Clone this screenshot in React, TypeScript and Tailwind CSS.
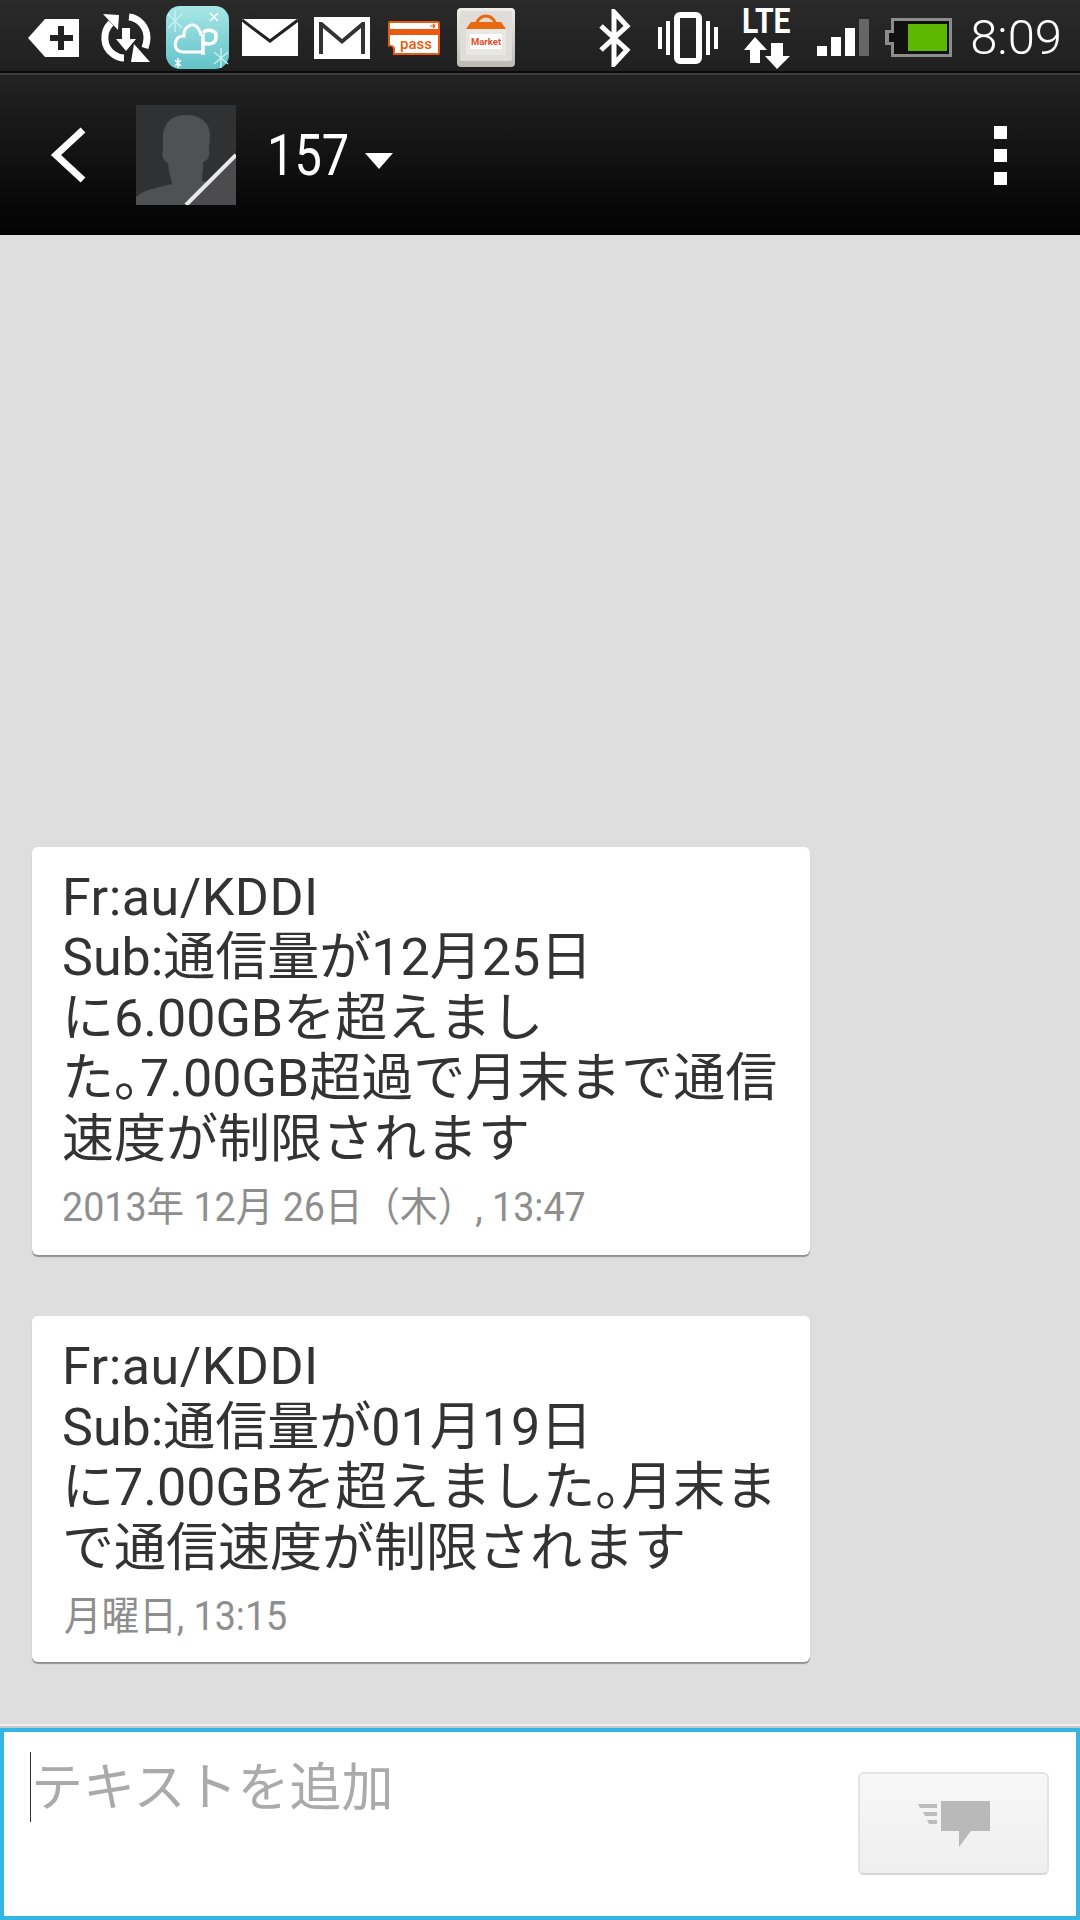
const font = { fontFamily: '"Roboto", "Noto Sans CJK JP", sans-serif' };

function StatusIcons() {
  return (
    <div className="flex h-[71px] items-center pt-[4px] pl-[28px] pr-[18px]">
      {/* notification tag */}
      <svg width="51" height="40" viewBox="0 0 51 40" className="shrink-0">
        <polygon points="0,20 17,1 51,1 51,39 17,39" fill="#fff" />
        <path d="M30 8h6v9h9v6h-9v9h-6v-9h-8v-6h8z" fill="#222" />
      </svg>
      {/* sync */}
      <svg width="52" height="52" viewBox="0 0 52 52" className="ml-[21px] shrink-0">
        <path d="M11 11C2 20 3 35 13 42C17 45 21 46 24 46" fill="none" stroke="#fff" strokeWidth="7" />
        <path d="M29 5C39 6 47 15 47 26C47 30 46 33 45 36" fill="none" stroke="#fff" strokeWidth="7" />
        <polygon points="3,2 19,3 18,18" fill="#fff" />
        <polygon points="34,32 50,50 31,50" fill="#fff" />
        <path d="M22 16h8v11h6L26 39 16 27h6z" fill="#fff" />
      </svg>
      {/* app icon */}
      <svg width="63" height="63" viewBox="0 0 63 63" className="ml-[14px] shrink-0">
        <defs>
          <linearGradient id="app" x1="0" y1="0" x2="0" y2="1">
            <stop offset="0" stopColor="#a9e6e6" />
            <stop offset="1" stopColor="#62c3c8" />
          </linearGradient>
        </defs>
        <rect width="63" height="63" rx="14" fill="url(#app)" />
        <path d="M37 46H18C10 46 8 40 10 35C11 31 15 30 18 30C17 21 27 15 32 22C34 25 35 27 35 30" fill="none" stroke="#fff" strokeWidth="3" />
        <path d="M37 49V28M37 27C40 23 51 23 50 31C50 39 41 39 37 36" fill="none" stroke="#fff" strokeWidth="3.5" />
        <g stroke="#c6f0f0" strokeWidth="1.5">
          <path d="M2 8L16 22M16 8L2 22M9 4V26" />
          <path d="M48 46L62 58M62 46L48 58M55 42V62" />
          <path d="M44 7L52 15M52 7L44 15" stroke="#fff" />
          <path d="M9 54L15 60M15 54L9 60M12 52V62" stroke="#fff" />
        </g>
      </svg>
      {/* mail */}
      <svg width="56" height="37" viewBox="0 0 56 37" className="ml-[13px] shrink-0">
        <rect width="56" height="37" fill="#fff" />
        <polyline points="0,1 28,22 56,1" fill="none" stroke="#222" strokeWidth="3" />
      </svg>
      {/* gmail */}
      <svg width="56" height="42" viewBox="0 0 56 42" className="ml-[16px] shrink-0">
        <rect width="56" height="42" fill="#fff" />
        <path d="M5 37V5h3L28 22 48 5h3v32h-4V11L28 27 9 11v26z" fill="#333" />
      </svg>
      {/* pass */}
      <svg width="52" height="34" viewBox="0 0 52 34" className="ml-[18px] shrink-0">
        <path d="M2 0H50a2 2 0 0 1 2 2V32a2 2 0 0 1-2 2H5V28a3 3 0 0 0-5-2V2a2 2 0 0 1 2-2z" fill="#ec5a10" />
        <path d="M2 2H50V32H7V27a5 5 0 0 0-5-3z" fill="#fff" />
        <rect x="0" y="8" width="52" height="6" fill="#ec5a10" />
        <path d="M42 5h5M45 3l2 2-2 2" stroke="#ec5a10" strokeWidth="1.2" fill="none" />
        <text x="28" y="28" textAnchor="middle" fontSize="15" fontWeight="500" fill="#ec5a10" fontFamily="Roboto, sans-serif">
          pass
        </text>
      </svg>
      {/* market */}
      <svg width="58" height="59" viewBox="0 0 58 59" className="ml-[17px] shrink-0">
        <defs>
          <linearGradient id="mk" x1="0" y1="0" x2="0" y2="1">
            <stop offset="0" stopColor="#f0eeea" />
            <stop offset="1" stopColor="#bdbab4" />
          </linearGradient>
        </defs>
        <rect width="58" height="59" rx="4" fill="url(#mk)" />
        <rect x="3" y="3" width="52" height="50" rx="2" fill="#e0ddd8" />
        <path d="M19 20C19 4 39 4 39 20" fill="none" stroke="#e8690f" strokeWidth="3" />
        <path d="M9 21L14 14H44L49 21z" fill="#e8690f" />
        <rect x="9" y="21" width="40" height="26" fill="#e9e7e3" />
        <rect x="13" y="26" width="32" height="15" rx="1" fill="#fff" />
        <text x="29" y="37" textAnchor="middle" fontSize="9.5" fontWeight="700" fill="#e0502a" fontFamily="Roboto, sans-serif">
          Market
        </text>
      </svg>
      {/* bluetooth */}
      <svg width="32" height="58" viewBox="0 0 32 58" className="ml-auto shrink-0">
        <polyline points="2,17 28,41 15,55 15,3 28,17 2,41" fill="none" stroke="#fff" strokeWidth="5" />
      </svg>
      {/* vibrate */}
      <svg width="60" height="52" viewBox="0 0 60 52" className="ml-[27px] shrink-0">
        <rect x="19" y="3" width="22" height="46" rx="3" fill="none" stroke="#fff" strokeWidth="6" />
        <rect x="0" y="15" width="4" height="22" fill="#fff" />
        <rect x="8" y="9" width="4" height="34" fill="#fff" />
        <rect x="48" y="9" width="4" height="34" fill="#fff" />
        <rect x="56" y="15" width="4" height="22" fill="#fff" />
      </svg>
      {/* lte */}
      <div className="ml-[24px] mt-[2px] flex w-[49px] shrink-0 flex-col">
        <span className="h-[26px] origin-left scale-x-[0.86] text-[35px] leading-[26px] font-bold text-white">LTE</span>
        <svg width="49" height="32" viewBox="0 0 49 32" className="mt-[2px] shrink-0">
          <polygon points="13,0 25,13 18,13 18,26 8,26 8,13 2,13" fill="#fff" />
          <polygon points="35,32 48,19 41,19 41,6 29,6 29,19 23,19" fill="#fff" />
        </svg>
      </div>
      {/* signal */}
      <svg width="52" height="37" viewBox="0 0 52 37" className="ml-[26px] shrink-0">
        <rect x="0" y="27" width="10" height="10" fill="#fff" />
        <rect x="14" y="18" width="10" height="19" fill="#fff" />
        <rect x="28" y="9" width="10" height="28" fill="#fff" />
        <rect x="42" y="0" width="10" height="37" fill="#666" />
      </svg>
      {/* battery */}
      <svg width="67" height="39" viewBox="0 0 67 39" className="ml-[16px] shrink-0">
        <path d="M6 0H67V39H6V27H0V12H6z" fill="#8c8c8c" />
        <path d="M9 3H64V36H9V24H4V15H9z" fill="#111" />
        <rect x="23" y="6" width="39" height="27" fill="#5cb800" />
      </svg>
      <span className="ml-[18px] text-[49px] leading-none font-light text-white">8:09</span>
    </div>
  );
}

function Bubble({ lines, date, dateClass }: { lines: React.ReactNode[]; date: string; dateClass: string }) {
  return (
    <div className="w-[778px] rounded-[6px] bg-white pl-[30px] pt-[21px] shadow-[0_2px_1px_rgba(0,0,0,0.35)]">
      <div className="text-[52px] leading-[60.5px] whitespace-nowrap text-[#333]">
        {lines.map((line, i) => (
          <div key={i}>{line}</div>
        ))}
      </div>
      <div className={`mt-[10px] origin-left scale-x-[0.94] text-[40px] leading-[56px] whitespace-nowrap text-[#8e8e8e] ${dateClass}`}>
        {date}
      </div>
    </div>
  );
}

function Maru() {
  return <span className="[font-feature-settings:'halt']">。</span>;
}

export default function App() {
  const from = <span className="tracking-[0.5px]">Fr:au/KDDI</span>;

  return (
    <div className="flex h-[1920px] w-[1080px] flex-col overflow-hidden bg-[#dedede]" style={font}>
      <div className="bg-gradient-to-b from-[#2a2a2a] to-[#1f1f1f]">
        <StatusIcons />
        <div className="h-[2px] bg-[#0a0a0a]" />
        <div className="h-[2px] bg-[#3d3d3d]" />
      </div>

      <div className="flex h-[160px] items-center bg-gradient-to-b from-[#232323] to-[#040404]">
        <svg width="36" height="56" viewBox="0 0 36 56" className="ml-[50px] shrink-0">
          <polyline points="33,3 6,28 33,53" fill="none" stroke="#fff" strokeWidth="7" />
        </svg>
        <svg width="100" height="100" viewBox="0 0 100 100" className="ml-[50px] shrink-0">
          <rect width="100" height="100" fill="#303133" />
          <path d="M50 10C35 10 27 19 27 33L27 46C25 50 28 57 32 58L33 66C34 72 36 76 36 79C25 82 8 84 0 92V100H100V82C88 82 76 79 66 76C66 72 66 68 67 64V57C72 56 74 50 73 46L74 30C74 18 64 10 50 10Z" fill="#505153" />
          <polygon points="50,100 100,50 100,100" fill="#4c4c4e" />
          <line x1="50" y1="100" x2="100" y2="50" stroke="#e8e8e8" strokeWidth="4" />
        </svg>
        <span className="ml-[31px] inline-block w-[81px] origin-left scale-x-[0.84] text-[58px] leading-none text-white">157</span>
        <svg width="28" height="16" viewBox="0 0 28 16" className="ml-[17px] mt-[12px] shrink-0">
          <polygon points="0,0 28,0 14,16" fill="#fff" />
        </svg>
        <div className="mr-[73px] ml-auto flex flex-col gap-[10px]">
          <div className="h-[13px] w-[13px] bg-white" />
          <div className="h-[13px] w-[13px] bg-white" />
          <div className="h-[13px] w-[13px] bg-white" />
        </div>
      </div>

      <div className="flex flex-1 flex-col justify-end gap-[61px] pb-[62px] pl-[32px]">
        <Bubble
          lines={[
            from,
            "Sub:通信量が12月25日",
            "に6.00GBを超えまし",
            <>た<Maru />7.00GB超過で月末まで通信</>,
            "速度が制限されます",
          ]}
          date="2013年 12月 26日（木）, 13:47"
          dateClass="mb-[19px]"
        />
        <Bubble
          lines={[
            from,
            "Sub:通信量が01月19日",
            <>に7.00GBを超えました<Maru />月末ま</>,
            "で通信速度が制限されます",
          ]}
          date="月曜日, 13:15"
          dateClass="mb-[17px] ml-[2px]"
        />
      </div>

      <div className="h-[2px] bg-[#f0f0f0]" />
      <div className="h-[2px] bg-[#c8c8c8]" />
      <div className="flex h-[192px] items-start border-4 border-[#33b5e5] bg-white">
        <div className="mt-[20px] ml-[26px] h-[70px] w-px shrink-0 bg-[#333]" />
        <span className="mt-[22px] text-[52px] leading-[70px] text-[#aaaaaa]">テキストを追加</span>
        <div className="mt-[40px] mr-[27px] ml-auto flex h-[103px] w-[191px] items-center justify-center rounded-[6px] border-2 border-[#e4e4e4] border-b-[#d6d6d6] bg-gradient-to-b from-[#f7f7f7] to-[#efefef]">
          <svg width="72" height="46" viewBox="0 0 72 46" className="shrink-0">
            <polygon points="23,0 72,0 72,30 53,30 41,46 41,30 23,30" fill="#b9b9b9" />
            <polygon points="0,3 19,3 19,7 2,7" fill="#bdbdbd" />
            <polygon points="5,11 19,11 19,15 7,15" fill="#bdbdbd" />
            <polygon points="9,19 19,19 19,23 11,23" fill="#bdbdbd" />
          </svg>
        </div>
      </div>
    </div>
  );
}
